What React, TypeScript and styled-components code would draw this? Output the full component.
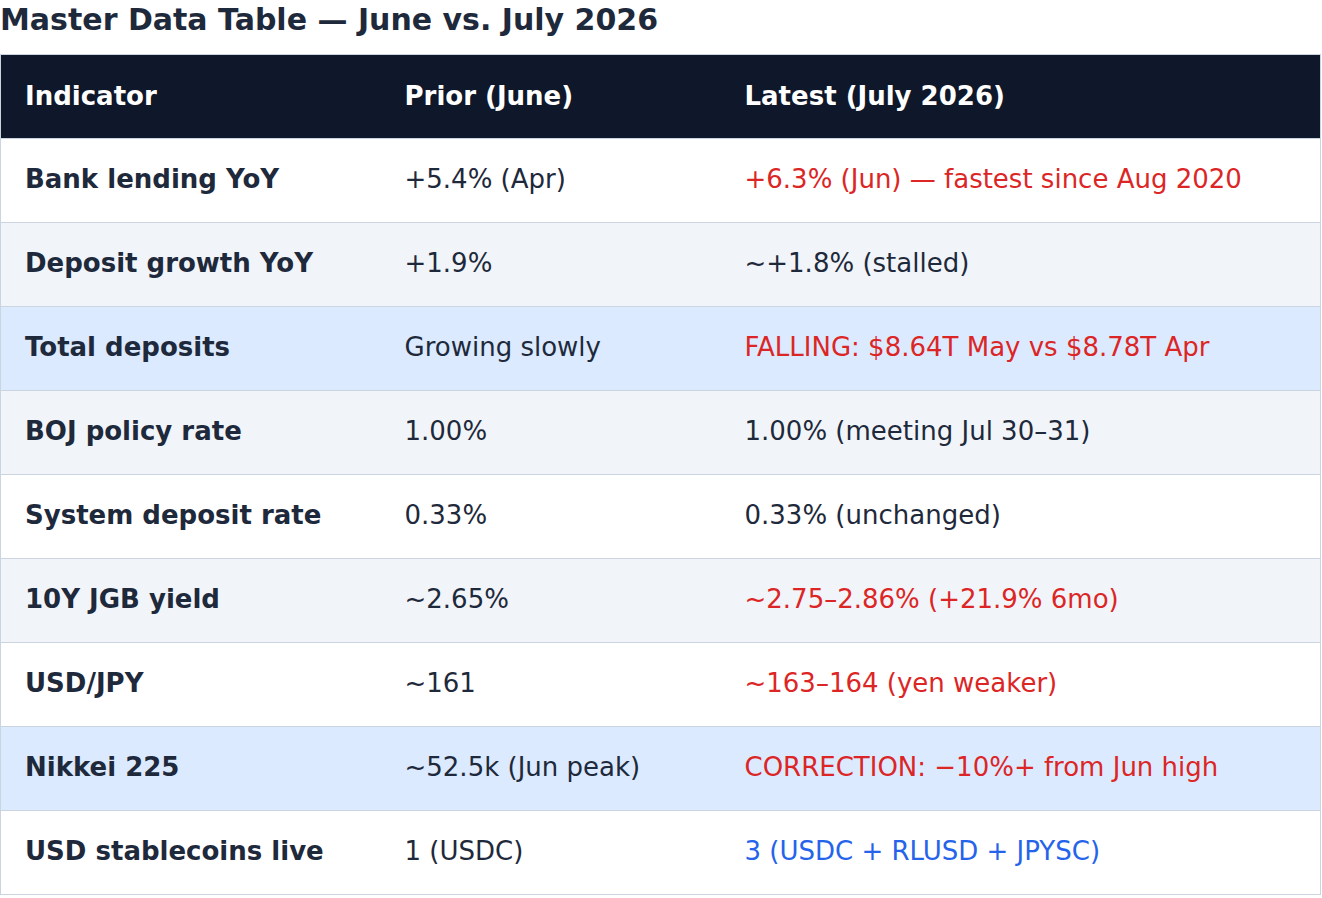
import { FC } from 'react'
import styled, { createGlobalStyle, css } from 'styled-components'

/**
 * Data
 */

type Tone = 'plain' | 'alert' | 'info'
type Shade = 'white' | 'stripe' | 'highlight'

interface Row {
  indicator: string
  prior: string
  latest: string
  tone: Tone
  shade: Shade
}

const rows: Row[] = [
  { indicator: 'Bank lending YoY', prior: '+5.4% (Apr)', latest: '+6.3% (Jun) — fastest since Aug 2020', tone: 'alert', shade: 'white' },
  { indicator: 'Deposit growth YoY', prior: '+1.9%', latest: '~+1.8% (stalled)', tone: 'plain', shade: 'stripe' },
  { indicator: 'Total deposits', prior: 'Growing slowly', latest: 'FALLING: $8.64T May vs $8.78T Apr', tone: 'alert', shade: 'highlight' },
  { indicator: 'BOJ policy rate', prior: '1.00%', latest: '1.00% (meeting Jul 30–31)', tone: 'plain', shade: 'stripe' },
  { indicator: 'System deposit rate', prior: '0.33%', latest: '0.33% (unchanged)', tone: 'plain', shade: 'white' },
  { indicator: '10Y JGB yield', prior: '~2.65%', latest: '~2.75–2.86% (+21.9% 6mo)', tone: 'alert', shade: 'stripe' },
  { indicator: 'USD/JPY', prior: '~161', latest: '~163–164 (yen weaker)', tone: 'alert', shade: 'white' },
  { indicator: 'Nikkei 225', prior: '~52.5k (Jun peak)', latest: 'CORRECTION: −10%+ from Jun high', tone: 'alert', shade: 'highlight' },
  { indicator: 'USD stablecoins live', prior: '1 (USDC)', latest: '3 (USDC + RLUSD + JPYSC)', tone: 'info', shade: 'white' }
]

const shades: Record<Shade, string> = {
  white: '#ffffff',
  stripe: '#f1f5f9',
  highlight: '#dbeafe'
}

const tones: Record<Tone, string> = {
  plain: '#1e293b',
  alert: '#dc2626',
  info: '#2563eb'
}

/**
 * Component
 */

const App: FC = () => {
  return (
    <>
      <GlobalStyle />
      <StyledPage>
        <StyledTitle>Master Data Table — June vs. July 2026</StyledTitle>
        <StyledTable>
          <thead>
            <tr>
              <StyledHead>Indicator</StyledHead>
              <StyledHead>Prior (June)</StyledHead>
              <StyledHead>Latest (July 2026)</StyledHead>
            </tr>
          </thead>
          <tbody>
            {rows.map(row => (
              <StyledRow key={row.indicator} shade={row.shade}>
                <StyledCell bold>{row.indicator}</StyledCell>
                <StyledCell>{row.prior}</StyledCell>
                <StyledCell tone={row.tone}>{row.latest}</StyledCell>
              </StyledRow>
            ))}
          </tbody>
        </StyledTable>
      </StyledPage>
    </>
  )
}

export default App

/**
 * Styled Component
 */

const GlobalStyle = createGlobalStyle`
  html, body {
    margin: 0;
    padding: 0;
    background: #ffffff;
  }
  body {
    font-family: 'DejaVu Sans', 'Noto Sans', sans-serif;
    color: #1e293b;
  }
`

const StyledPage = styled.div`
  width: 1322px;
`

const StyledTitle = styled.h2`
  margin: 0;
  height: 54px;
  font-size: 30px;
  line-height: 40px;
  font-weight: bold;
  color: #1e293b;
`

const StyledTable = styled.table`
  width: 1321px;
  border-collapse: collapse;
  table-layout: fixed;
  border: 1px solid #cbd5e1;

  th:nth-child(1) {
    width: 380px;
  }
  th:nth-child(2) {
    width: 340px;
  }
`

const StyledHead = styled.th`
  height: 84px;
  padding: 0 24px 1px;
  background: #0f172a;
  color: #ffffff;
  font-size: 26px;
  font-weight: bold;
  text-align: left;
  box-sizing: border-box;
`

const StyledRow = styled.tr<{ shade: Shade }>`
  ${({ shade }) => css`
    background: ${shades[shade]};
    border-top: 1px solid #cbd5e1;
  `}
`

const StyledCell = styled.td<{ bold?: boolean; tone?: Tone }>`
  ${({ bold, tone }) => css`
    height: 84px;
    padding: 0 24px 3px;
    font-size: 26px;
    font-weight: ${bold ? 'bold' : 'normal'};
    color: ${tones[tone ?? 'plain']};
    box-sizing: border-box;
    white-space: nowrap;
  `}
`
